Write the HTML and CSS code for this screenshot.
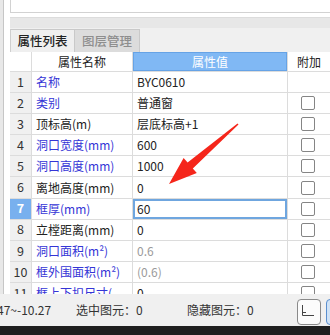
FILE: index.html
```html
<!DOCTYPE html>
<html>
<head>
<meta charset="utf-8">
<link rel="stylesheet" href="styles.css">
</head>
<body>
<div class="app">
  <div class="main">
    <div class="leftstrip"></div>
    <div class="panel">
      <div class="topbox"></div>
      <div class="graybar"></div>
      <div class="tabs">
        <div class="tab active">属性列表</div>
        <div class="tab">图层管理</div>
      </div>
      <div class="grid">
        <div class="row head">
          <div class="c num"></div>
          <div class="c name center">属性名称</div>
          <div class="c val hval center">属性值</div>
          <div class="c ext center">附加</div>
        </div>
        <div class="row"><div class="c num">1</div><div class="c name blue">名称</div><div class="c val">BYC0610</div><div class="c ext"></div></div>
        <div class="row"><div class="c num">2</div><div class="c name blue">类别</div><div class="c val">普通窗</div><div class="c ext"><span class="cb"></span></div></div>
        <div class="row"><div class="c num">3</div><div class="c name">顶标高(m)</div><div class="c val">层底标高+1</div><div class="c ext"><span class="cb"></span></div></div>
        <div class="row"><div class="c num">4</div><div class="c name blue">洞口宽度(mm)</div><div class="c val">600</div><div class="c ext"><span class="cb"></span></div></div>
        <div class="row"><div class="c num">5</div><div class="c name blue">洞口高度(mm)</div><div class="c val">1000</div><div class="c ext"><span class="cb"></span></div></div>
        <div class="row"><div class="c num">6</div><div class="c name">离地高度(mm)</div><div class="c val">0</div><div class="c ext"><span class="cb"></span></div></div>
        <div class="row"><div class="c num sel">7</div><div class="c name blue">框厚(mm)</div><div class="c val edit">60</div><div class="c ext"><span class="cb"></span></div></div>
        <div class="row"><div class="c num">8</div><div class="c name">立樘距离(mm)</div><div class="c val">0</div><div class="c ext"><span class="cb"></span></div></div>
        <div class="row"><div class="c num">9</div><div class="c name blue">洞口面积(m²)</div><div class="c val gray">0.6</div><div class="c ext"><span class="cb"></span></div></div>
        <div class="row"><div class="c num">10</div><div class="c name blue">框外围面积(m²)</div><div class="c val gray">(0.6)</div><div class="c ext"><span class="cb"></span></div></div>
        <div class="row"><div class="c num">11</div><div class="c name blue">框上下扣尺寸(</div><div class="c val">0</div><div class="c ext"><span class="cb"></span></div></div>
      </div>
    </div>
  </div>
  <div class="status">
    <span class="coord">47~-10.27</span>
    <span class="st1">选中图元：0</span>
    <span class="st2">隐藏图元：0</span>
    <span class="btn">
      <svg width="24" height="26" viewBox="0 0 24 26"><path d="M5.5 6v10.5H17M5.5 13.5H9" fill="none" stroke="#444" stroke-width="1"/></svg>
    </span>
    <span class="btn2"></span>
  </div>
  <div class="darkbar"></div>
</div>
<svg class="arrow" width="330" height="335" viewBox="0 0 330 335">
  <polygon points="238.5,124.6 192.8,168.5 196.8,173.1 169,184 183.6,157.9 187.6,162.5 237.5,123.4" fill="#f5261b"/>
</svg>
</body>
</html>
```
FILE: styles.css
```css
html, body {
  margin: 0;
  padding: 0;
}
body {
  width: 330px;
  height: 335px;
  overflow: hidden;
  position: relative;
  background: #ffffff;
  font-family: "Noto Sans CJK SC", "Noto Sans", sans-serif;
  font-size: 12px;
  color: #222;
}
.app {
  display: flex;
  flex-direction: column;
  height: 335px;
}
.main {
  flex: 1;
  display: flex;
  min-height: 0;
}
.leftstrip {
  width: 10px;
  flex: none;
  background: linear-gradient(to right, #e8e8e8 0, #e8e8e8 3px, #c6c6c6 3px, #c6c6c6 4px, #ffffff 4px);
}
.panel {
  flex: 1;
  display: flex;
  flex-direction: column;
  min-width: 0;
  overflow: hidden;
}
.topbox {
  height: 12px;
  flex: none;
  border-left: 1px solid #d2d2d2;
  border-bottom: 1px solid #d2d2d2;
  margin-bottom: 4px;
}
.graybar {
  height: 10px;
  flex: none;
  background: #e7e7e7;
  border-top: 1px solid #dcdcdc;
}
.tabs {
  height: 24px;
  flex: none;
  background: #f0f0f0;
  display: flex;
  align-items: flex-end;
  box-sizing: border-box;
  padding-top: 1px;
}
.tab {
  height: 23px;
  box-sizing: border-box;
  width: 65px;
  display: flex;
  align-items: center;
  justify-content: center;
  line-height: 1;
  background: #dcdcdc;
  color: #8e8e8e;
  border: 1px solid #c9c9c9;
  border-bottom: none;
  border-left: none;
  font-weight: 500;
  font-size: 12.5px;
}
.tab.active {
  width: 65px;
  background: #efefef;
  color: #222;
  border-left: 1px solid #cfcfcf;
}
.grid {
  flex: 1;
  min-height: 0;
  overflow: hidden;
  border-left: 1px solid #d8d8d8;
  margin-left: -1px;
}
.row {
  display: grid;
  grid-template-columns: 22px 101px 155px 42px;
  height: 21.1px;
  box-sizing: border-box;
  border-bottom: 1px solid #dcdcdc;
}
.row.head {
  height: 20px;
}
.c {
  display: flex;
  align-items: center;
  box-sizing: border-box;
  border-right: 1px solid #dcdcdc;
  padding-left: 4px;
  white-space: nowrap;
  overflow: hidden;
  line-height: 1;
}
.c.center {
  justify-content: center;
  padding-left: 0;
}
.num {
  background: #f0f0f0;
  justify-content: center;
  padding-left: 0;
  color: #333;
  font-size: 12.5px;
}
.head .num {
  background: #ffffff;
}
.num.sel {
  background: #78b0ee;
  color: #ffffff;
  font-weight: bold;
}
.hval {
  background: #80b8f4;
  color: #ffffff;
  box-shadow: inset 0 0 0 1px #66a3e6;
}
.blue {
  color: #3535d6;
}
.gray {
  color: #9a9a9a;
}
.edit {
  box-shadow: inset 0 0 0 2px #6fa6df;
}
.ext {
  justify-content: center;
  padding-left: 0;
  border-right: none;
}
.cb {
  width: 14px;
  height: 14px;
  box-sizing: border-box;
  border: 1px solid #858585;
  border-radius: 2px;
  background: #fff;
  margin-left: -2px;
}
.status {
  height: 32px;
  flex: none;
  background: #f0f0f0;
  display: flex;
  align-items: center;
  position: relative;
  color: #333;
  font-size: 12px;
  line-height: 1;
  overflow: hidden;
}
.status > span {
  flex: none;
}
.coord {
  margin-left: -3px;
  width: 79px;
}
.st1 {
  width: 111px;
}
.st2 {
  width: 110px;
}
.btn {
  width: 24px;
  height: 26px;
  box-sizing: border-box;
  border: 1px solid #8a8a8a;
  border-radius: 4px;
  background: #fbfbfb;
  display: flex;
  margin-top: 3px;
  overflow: hidden;
}
.btn svg {
  margin: -1px;
}
.btn2 {
  margin-left: 5px;
  width: 20px;
  height: 26px;
  box-sizing: border-box;
  border: 1px solid #5b8fcf;
  border-radius: 4px;
  background: #cfe2f6;
  margin-top: 3px;
}
.darkbar {
  height: 9px;
  flex: none;
  background: #1f1f1f;
}
.arrow {
  position: absolute;
  left: 0;
  top: 0;
  pointer-events: none;
}
```
